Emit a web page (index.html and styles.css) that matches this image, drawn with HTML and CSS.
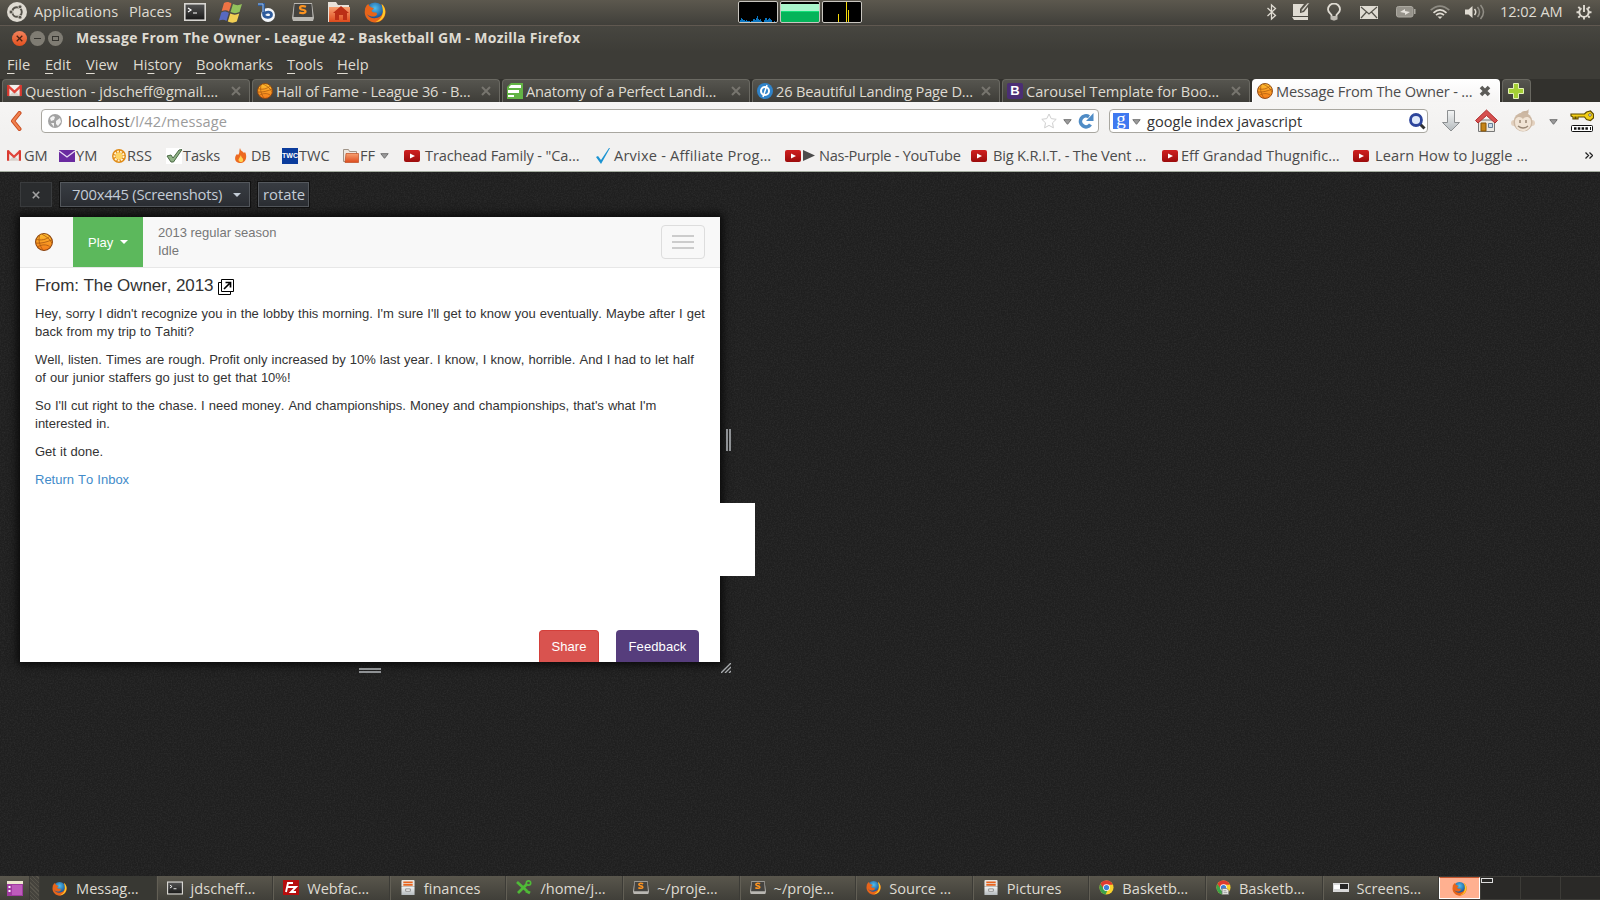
FILE: index.html
```html
<!DOCTYPE html>
<html lang="en">
<head>
<meta charset="utf-8">
<title>Message From The Owner - League 42 - Basketball GM</title>
<link rel="stylesheet" href="styles.css">
</head>
<body>
<svg class="defs" width="0" height="0">
  <defs>
    <linearGradient id="gold" x1="0" y1="0" x2="0" y2="1"><stop offset="0" stop-color="#ffbf2e"/><stop offset="1" stop-color="#f47a1a"/></linearGradient>
    <linearGradient id="red" x1="0" y1="0" x2="0" y2="1"><stop offset="0" stop-color="#d02020"/><stop offset="1" stop-color="#9c0c0c"/></linearGradient>
    <linearGradient id="sil" x1="0" y1="0" x2="0" y2="1"><stop offset="0" stop-color="#f4f5f5"/><stop offset="1" stop-color="#b4babd"/></linearGradient>
    <linearGradient id="blk" x1="0" y1="0" x2="0" y2="1"><stop offset="0" stop-color="#555"/><stop offset="1" stop-color="#171717"/></linearGradient>
    <linearGradient id="org" x1="0" y1="0" x2="0" y2="1"><stop offset="0" stop-color="#f7a070"/><stop offset="1" stop-color="#dd4a1c"/></linearGradient>
    <radialGradient id="sea" cx=".5" cy=".3" r=".6"><stop offset="0" stop-color="#4fc0ee"/><stop offset="1" stop-color="#123f86"/></radialGradient>
  </defs>
  <symbol id="ball" viewBox="0 0 16 16"><circle cx="8" cy="8" r="7.500" fill="url(#gold)" stroke="#8a4310" stroke-width=".9"/><path d="M1 5.500c4 1.500 9 .5 12-2.500M.6 9c5 .5 10-1 14.600-3M6 1c4 2 7 4 9 8M2 12.500c4-2.500 8-2.500 11-.5M4 2c-1 5 0 9 3 13" fill="none" stroke="#a8560f" stroke-width=".7"/></symbol>
  <symbol id="gmail" viewBox="0 0 16 14"><path d="M1 1h14v12H1z" fill="#f1efec"/><path d="M2 13l6-6 6 6z" fill="#d8d2cb"/><path d="M1 2l7 6.500L15 2" fill="none" stroke="#e0453a" stroke-width="2.500"/><path d="M0 1h2.500v12H0zM13.500 1H16v12h-2.500z" fill="#d93a30"/></symbol>
  <symbol id="yt" viewBox="0 0 16 12"><rect width="16" height="12" rx="2" fill="url(#red)"/><path d="M6 3.500v5L11 6z" fill="#fff"/></symbol>
  <symbol id="fox" viewBox="0 0 22 22"><circle cx="11" cy="11" r="9.500" fill="url(#sea)"/><path d="M1 6c0 8 5 10 9 9.500 3-.5 4-3 2-4-2 0-4 0-4.500-2l2.500-2C7 6 5 6 4.500 3 2 4 1 7 .7 11c0 6 5 10.500 10.500 10.500S22 17 21.500 10c-.2-3-2-6-4-7 3 5 2 10-1.500 12.500C12 18 6 18 3 13z" fill="#e8641a"/><path d="M17.500 3c4 3 5 9 2 13.500-2 3-5 4.500-8 4.500 7-3 9-9 6-18z" fill="#ffc928"/></symbol>
  <symbol id="term" viewBox="0 0 22 18"><rect x=".8" y=".8" width="20.400" height="16.400" fill="url(#blk)" stroke="#d8d6d2" stroke-width="1.600"/><path d="M4 5l3 2-3 2M9 10h4" stroke="#fff" stroke-width="1.200" fill="none"/></symbol>
  <symbol id="subl" viewBox="0 0 22 20"><path d="M2 1h18l2 15-1 3H1l-1-3z" fill="#b9b7b2"/><path d="M2.500 2h17l1 13h-19z" fill="#444340"/><path d="M14 4.700c-2.500-1-6-.8-6 1.200 0 2.500 5.500 1.300 5.500 3.600 0 1.800-3.500 2-6.200.9" fill="none" stroke="#fa9220" stroke-width="2.200"/></symbol>
  <symbol id="cab" viewBox="0 0 16 16"><rect x="1" y="0" width="14" height="7" rx="1" fill="#e9e6e2"/><path d="M3 1.500h10v1.800H3zM3 4h10v2H3z" fill="#e8641e"/><path d="M1 7h14v9H1z" fill="url(#sil)"/><path d="M5.500 9.500h5v2.500h-5z" fill="#f8f8f8" stroke="#8b8b8b"/></symbol>
  <symbol id="chrome" viewBox="0 0 16 16"><circle cx="8" cy="8" r="7.500" fill="#f9d32d"/><path d="M1.500 4.200A7.500 7.500 0 0 1 14.800 5H8L4.500 9.500z" fill="#df3b2f"/><path d="M1.500 4.200L6 11l3 .2-2 4.200A7.500 7.500 0 0 1 1.500 4.200z" fill="#3da34a"/><circle cx="8" cy="8" r="3.600" fill="#fff"/><circle cx="8" cy="8" r="2.800" fill="#3f7fd4"/></symbol>
  <symbol id="cross" viewBox="0 0 10 10"><path d="M1 1l8 8M9 1L1 9" stroke="currentColor" stroke-width="2"/></symbol>
  <symbol id="caret" viewBox="0 0 9 6"><path d="M.8.700h7.400L4.500 5.300z" fill="#9b9b9b" stroke="#707070"/></symbol>
</svg>

<header class="panel">
  <div class="launchers">
    <span class="slot s-ubuntu"><svg width="20" height="20" viewBox="0 0 20 20"><circle cx="10" cy="10" r="10" fill="#dfdbd2"/><circle cx="10" cy="10" r="4.800" fill="none" stroke="#55524a" stroke-width="1.900" stroke-dasharray="8.800 1.250" stroke-dashoffset="-5.600"/><g fill="#55524a" stroke="#dfdbd2" stroke-width=".7"><circle cx="4" cy="10" r="1.900"/><circle cx="13" cy="4.800" r="1.900"/><circle cx="13" cy="15.200" r="1.900"/></g></svg></span>
    <span class="slot s-apps">Applications</span>
    <span class="slot s-places">Places</span>
    <span class="slot s-term"><svg width="22" height="18"><use href="#term"/></svg></span>
    <span class="slot s-win"><svg width="24" height="22" viewBox="0 0 24 22"><path d="M5 2c3-1.500 5-1 7.500.5L10 10.500C8 9 5.500 9 2.700 10z" fill="#ee7344"/><path d="M14 3c3 1.500 6 1.500 9 0l-2.500 8c-3 1.500-6 1.500-9 0z" fill="#93c25c"/><path d="M2.300 11.500c3-1.500 5-1 7.500.5L7.500 20C5.500 18.500 3 18.500 0 19.500z" fill="#5769c0"/><path d="M11.300 12.500c3 1.500 6 1.500 9 0l-2.500 8c-3 1.500-6 1.500-9 0z" fill="#f2cf54"/></svg></span>
    <span class="slot s-b"><svg width="20" height="20" viewBox="0 0 20 20"><circle cx="11" cy="13" r="7" fill="#f5f7fa"/><path d="M1 2.500h5.500v9c0 5 8 5 8 1.300 0-3.300-5-3.500-7-1" fill="none" stroke="#2f5c9c" stroke-width="2.800"/><path d="M1 2h5v8" fill="none" stroke="#9abce6"/></svg></span>
    <span class="slot s-subl"><svg width="22" height="20"><use href="#subl"/></svg></span>
    <span class="slot s-home"><svg width="24" height="22" viewBox="0 0 24 22"><path d="M1 1h8l2 3h11v17H1z" fill="#e8e2da"/><path d="M2 6h21v15H2z" fill="url(#org)"/><path d="M14 5l8 7h-2v7h-4v-5h-4v5H8v-7H6z" fill="#bb2f16"/></svg></span>
    <span class="slot"><svg width="22" height="22"><use href="#fox"/></svg></span>
  </div>
  <div class="graphs">
    <span class="graph"><svg width="38" height="20" shape-rendering="crispEdges"><path d="M1 20v-2h1v-2h1v1h1v1h2v1h1v-1h1v1h3v1h1v-1h2v-2h2v1h1v-2h1v-2h1v3h1v1h1v-1h1v2h1v1h2v-2h1v-2h2v2h1v-1h1v-1h1v1h1v1h1v2h2v-1h1v1h1v1z" fill="#0a76c2"/></svg></span>
    <span class="graph mem"></span>
    <span class="graph"><svg width="38" height="20" shape-rendering="crispEdges"><path d="M15 12h1v8h-1zM23 0h1v20h-1zM25 8h1v12h-1z" fill="#f5d90a"/></svg></span>
  </div>
  <div class="tray">
    <span class="slot t-bt"><svg width="11" height="18" viewBox="0 0 11 18"><path d="M1.500 5l8 7.500L5.500 16V2l4 3.500-8 7.500" fill="none" stroke="#dfdbd2" stroke-width="1.300"/></svg></span>
    <span class="slot t-note"><svg width="18" height="18" viewBox="0 0 18 18"><path d="M1 1h11L8 6v4l4-1 4-5v9H1zM0 14h16v3H2z" fill="#dfdbd2"/><path d="M17.500 0l-6 7.500L9 9l1-2.700L15.500 0z" fill="#dfdbd2" stroke="#55524a" stroke-width=".5"/></svg></span>
    <span class="slot t-bulb"><svg width="14" height="18" viewBox="0 0 14 18"><path d="M4.500 12C3 10 1 9 1 6.500a6 6 0 0 1 12 0C13 9 11 10 9.500 12v3.500h-5z" fill="none" stroke="#dfdbd2" stroke-width="1.800"/><path d="M4 13h6v3l-2 1.500H6L4 16z" fill="#bdb9b1"/></svg></span>
    <span class="slot t-mail"><svg width="18" height="13" viewBox="0 0 18 13"><path d="M0 0h18v13H0z" fill="#dfdbd2"/><path d="M1 1l8 7 8-7M1 12l5.500-6M17 12l-5.500-6" fill="none" stroke="#55534b" stroke-width="1.200"/></svg></span>
    <span class="slot t-bat"><svg width="20" height="12" viewBox="0 0 20 12"><rect x=".5" y=".5" width="16.500" height="10.500" rx="2" fill="#96938b" stroke="#aaa79f"/><path d="M18 3h1.500v5H18z" fill="#aaa79f"/><path d="M4 6l5-3v2l5 1-5 3V7z" fill="#e5e2dc"/></svg></span>
    <span class="slot t-wifi"><svg width="20" height="14" viewBox="0 0 20 14" fill="none" stroke-width="1.700"><path d="M.7 5.200Q10-3 19.300 5.200" stroke="#8e8b83"/><path d="M3.500 7.800Q10 1.800 16.500 7.800M6 10.200Q10 6.500 14 10.200" stroke="#dfdbd2"/><path d="M7.500 11.500h5L10 14z" fill="#dfdbd2"/></svg></span>
    <span class="slot t-vol"><svg width="20" height="16" viewBox="0 0 20 16" fill="none"><path d="M0 5.500h3.500L7.500 2v12l-4-3.500H0z" fill="#dfdbd2"/><path d="M9.500 5q2.500 3 0 6" stroke="#dfdbd2" stroke-width="1.500"/><path d="M12.500 3q4 5 0 10M15.500 1q6 7 0 14" stroke="#918e86" stroke-width="1.500"/></svg></span>
    <span class="slot t-time">12:02 AM</span>
    <span class="slot"><svg width="16" height="16" viewBox="0 0 16 16" fill="none" stroke="#dfdbd2"><path d="M5.500 4.200a4.700 4.700 0 1 0 5 0M8 1v7" stroke-width="1.900"/><path d="M8 13v2.500M4 12l-1.700 1.700M12 12l1.700 1.700M3 8.300H.5M13 8.300h2.500M4 4.500L2.300 2.800M12 4.500l1.700-1.700" stroke-width="1.900"/></svg></span>
  </div>
</header>

<div class="titlebar">
  <span class="wbtn wclose"><svg width="7" height="7" viewBox="0 0 10 10"><path d="M1 1l8 8M9 1L1 9" stroke="#4b2415" stroke-width="1.800"/></svg></span>
  <span class="wbtn"><i class="dash"></i></span>
  <span class="wbtn"><i class="sq"></i></span>
  <b class="title">Message From The Owner - League 42 - Basketball GM - Mozilla Firefox</b>
</div>
<nav class="menubar">
  <span class="m1"><u>F</u>ile</span><span class="m2"><u>E</u>dit</span><span class="m3"><u>V</u>iew</span><span class="m4">Hi<u>s</u>tory</span><span class="m5"><u>B</u>ookmarks</span><span class="m6"><u>T</u>ools</span><span><u>H</u>elp</span>
</nav>

<div class="tabs">
  <div class="tab"><svg width="15" height="13"><use href="#gmail"/></svg><span class="tt wide">Question - jdscheff@gmail.…</span><svg class="x" width="10" height="10"><use href="#cross"/></svg></div>
  <div class="tab"><svg width="16" height="16"><use href="#ball"/></svg><span class="tt">Hall of Fame - League 36 - B…</span><svg class="x" width="10" height="10"><use href="#cross"/></svg></div>
  <div class="tab"><svg width="16" height="16" viewBox="0 0 16 16"><path d="M0 4l4-4h12v16H0z" fill="#62b345"/><path d="M4 2h10v3H2v-1zM1 7h11v3H1zM1 12h6v2H1z" fill="#fff"/></svg><span class="tt">Anatomy of a Perfect Landi…</span><svg class="x" width="10" height="10"><use href="#cross"/></svg></div>
  <div class="tab"><svg width="16" height="16" viewBox="0 0 16 16"><circle cx="8" cy="8" r="8" fill="#2f83c9"/><circle cx="8" cy="8" r="4" fill="none" stroke="#fff" stroke-width="2"/><path d="M10 2L6 14" stroke="#fff" stroke-width="1.500"/></svg><span class="tt">26 Beautiful Landing Page D…</span><svg class="x" width="10" height="10"><use href="#cross"/></svg></div>
  <div class="tab"><span class="bs">B</span><span class="tt wide">Carousel Template for Boo…</span><svg class="x" width="10" height="10"><use href="#cross"/></svg></div>
  <div class="tab active"><svg width="16" height="16"><use href="#ball"/></svg><span class="tt">Message From The Owner - …</span><svg class="x" width="12" height="12" viewBox="0 0 12 12"><path d="M2 2l8 8M10 2l-8 8" stroke="#5c5b58" stroke-width="3.600"/></svg></div>
  <div class="tab plus"><svg width="16" height="16" viewBox="0 0 16 16"><path d="M5.500.500h5v5h5v5h-5v5h-5v-5h-5v-5h5z" fill="#a5cf35" stroke="#e4f3b5"/></svg></div>
</div>

<div class="navbar">
  <svg class="back" width="12" height="20" viewBox="0 0 12 20"><path d="M9.500 2L3 10l6.500 8" fill="none" stroke="#c7491d" stroke-width="4" stroke-linecap="round" stroke-linejoin="round"/><path d="M9.500 2L3 10l6.500 8" fill="none" stroke="#f0824f" stroke-width="2.200" stroke-linecap="round"/></svg>
  <div class="field url">
    <svg width="14" height="14" viewBox="0 0 14 14"><circle cx="7" cy="7" r="7" fill="#a2a2a2"/><path d="M2 4l3-2 2 1-1 3-3 1zM8 7l4-3 1 4-3 4-2-2zM3 9l3 0 0 4z" fill="#f3f3f3"/></svg>
    <span class="addr">localhost<em>/l/42/message</em></span>
    <svg class="star" width="16" height="16" viewBox="0 0 16 16"><path d="M8 1l2.200 4.600 5 .7-3.700 3.500.9 5L8 12.400l-4.400 2.400.9-5L.8 6.300l5-.7z" fill="#fff" stroke="#cfcfcf"/></svg>
    <svg class="ucar" width="9" height="6"><use href="#caret"/></svg>
    <svg class="reload" width="16" height="16" viewBox="0 0 16 16"><path d="M12.500 11.500A5.500 5.500 0 1 1 11 3.700" fill="none" stroke="#4f8cc6" stroke-width="3.600"/><path d="M15.500 0v8H8z" fill="#4f8cc6"/></svg>
  </div>
  <div class="field search">
    <span class="goog">g</span><svg class="scar" width="9" height="6"><use href="#caret"/></svg>
    <span class="query">google index javascript</span>
    <svg width="17" height="17" viewBox="0 0 17 17"><path d="M11 11l4.500 4.500" stroke="#333" stroke-width="3"/><circle cx="7" cy="7" r="5.500" fill="#dfe9fa" stroke="#2d459c" stroke-width="2.800"/></svg>
  </div>
  <svg class="dl" width="18" height="22" viewBox="0 0 18 22"><path d="M5.500.500h7v12h5L9 21 .5 12.500h5z" fill="url(#sil)" stroke="#8c8f91"/></svg>
  <svg class="hm" width="23" height="24" viewBox="0 0 23 24"><path d="M3.500 11h16v11.500h-16z" fill="#ece9e2" stroke="#777"/><path d="M6 14h5v8H6z" fill="#c58417" stroke="#875508"/><path d="M13.500 14.500h4v4h-4z" fill="#cbd9e6" stroke="#667e96"/><path d="M11.500 1L22.500 11.500 20 14l-8.500-7.500L3 14 .5 11.500z" fill="#d65050" stroke="#b03030"/></svg>
  <svg class="mk" width="24" height="24" viewBox="0 0 24 24"><path d="M10 4c2-3 6-1 8-4-1 2 0 3-1 5z" fill="#c9b49f"/><circle cx="3" cy="14" r="3" fill="#e3d1bf"/><circle cx="21" cy="14" r="3" fill="#e3d1bf"/><circle cx="12" cy="13" r="9.500" fill="#cdb8a3"/><path d="M4 13c0-6 6-6 8-3 2-3 8-3 8 3 0 12-16 12-16 0z" fill="#f1e4d5"/><path d="M9 11v3M15 11v3M7 17q5 4 10 0" stroke="#9a8876" stroke-width="1.500" fill="none"/></svg>
  <svg class="c2" width="9" height="6"><use href="#caret"/></svg>
  <svg width="24" height="22" viewBox="0 0 24 22"><path d="M16.500 2l4-1 3 3v4l-3 2.500-4-1L14.500 7H8v2H6V7H5v2H3V7L1 6V4h13.500z" fill="#f3cf16" stroke="#5e4b00" stroke-width="1.200"/><circle cx="20" cy="5" r="1.300" fill="#fff" stroke="#222" stroke-width=".6"/><rect x="1.500" y="15.500" width="21" height="6" rx="1" fill="#fff" stroke="#111"/><path d="M4 18.500h14" stroke="#111" stroke-width="2.500" stroke-dasharray="2.500 1.300"/><path d="M20.500 17v3" stroke="#111"/></svg>
</div>

<div class="bookmarks">
  <span class="bm k1"><svg width="14" height="13"><use href="#gmail"/></svg><a>GM</a></span>
  <span class="bm k2"><svg width="16" height="12" viewBox="0 0 16 12"><path d="M0 0h16v12H0z" fill="#6a2aa0"/><path d="M0 1l8 6 8-6" fill="none" stroke="#e9dcf4" stroke-width="1.300"/></svg><a>YM</a></span>
  <span class="bm k3"><svg width="14" height="14" viewBox="0 0 14 14"><circle cx="7" cy="7" r="7" fill="#e08a14"/><circle cx="7" cy="7" r="4.500" fill="none" stroke="#fff2cf" stroke-width="2" stroke-dasharray="2 1.100"/><circle cx="7" cy="7" r="3.400" fill="#ffd463"/></svg><a>RSS</a></span>
  <span class="bm k4"><svg width="16" height="16" viewBox="0 0 16 16"><path d="M0 0h16v16H0z" fill="#fff"/><path d="M1 8l4-1 2 3 6-8 3-.5L7.500 14H5z" fill="#91b387" stroke="#4a6944"/></svg><a>Tasks</a></span>
  <span class="bm k5"><svg width="12" height="15" viewBox="0 0 12 15"><path d="M5 0c1 4 3 3 4 5l1-1c2 3 2 10-4 11C-1 15-1 9 2 6l1 1c2-2 1-4 2-7z" fill="#ed6a20"/><path d="M6 7c0 3 3 3 2 6-1 2-5 1-4.500-1.500z" fill="#ffd050"/></svg><a>DB</a></span>
  <span class="bm k6"><i class="twc">TWC</i><a>TWC</a></span>
  <span class="bm k7"><svg width="16" height="14" viewBox="0 0 16 14"><path d="M.5.500h5l1 2h7v10H.5z" fill="#eee7df" stroke="#a09488"/><path d="M3 4.500h12.500v9H2z" fill="url(#org)" stroke="#bf4d22" stroke-width=".7"/></svg><a>FF</a><svg class="ffc" width="9" height="6"><use href="#caret"/></svg></span>
  <span class="bm k8"><svg width="16" height="12"><use href="#yt"/></svg><a>Trachead Family - "Ca…</a></span>
  <span class="bm k9"><svg width="14" height="16" viewBox="0 0 14 16"><path d="M0 9l2-1 3 4L13 0h1L5 16z" fill="#1c94d2"/></svg><a>Arvixe - Affiliate Prog…</a></span>
  <span class="bm k10"><svg width="16" height="12"><use href="#yt"/></svg><svg class="tri" width="12" height="11" viewBox="0 0 12 11"><path d="M0 0l12 5.500L0 11z" fill="#4c4c4c"/></svg><a>Nas-Purple - YouTube</a></span>
  <span class="bm k11"><svg width="16" height="12"><use href="#yt"/></svg><a>Big K.R.I.T. - The Vent …</a></span>
  <span class="bm k12"><svg width="16" height="12"><use href="#yt"/></svg><a>Eff Grandad Thugnific…</a></span>
  <span class="bm k13"><svg width="16" height="12"><use href="#yt"/></svg><a>Learn How to Juggle …</a></span>
  <svg width="8" height="7" viewBox="0 0 8 7"><path d="M.5.500l3 3-3 3M4.500.500l3 3-3 3" fill="none" stroke="#222" stroke-width="1.300"/></svg>
</div>

<main class="stage">
  <svg class="grain" width="1600" height="704"><filter id="n" x="0" y="0" width="100%" height="100%"><feTurbulence type="fractalNoise" baseFrequency=".7" numOctaves="2" seed="4"/><feColorMatrix values="0 0 0 0 1  0 0 0 0 1  0 0 0 0 1  .11 0 0 0 -.04"/></filter><rect width="1600" height="704" filter="url(#n)"/></svg>
  <div class="rtools">
    <span class="rb rx"><svg width="8" height="8"><use href="#cross"/></svg></span>
    <span class="rb rsel">700x445 (Screenshots)<i class="down"></i></span>
    <span class="rb rrot">rotate</span>
  </div>
  <div class="frame">
    <div class="view">
      <div class="gmnav">
        <svg class="logo" width="18" height="18"><use href="#ball"/></svg>
        <span class="play">Play<i class="down"></i></span>
        <p class="status">2013 regular season<br>Idle</p>
        <span class="burger"><i></i><i></i><i></i></span>
      </div>
      <article class="msg">
        <h1>From: The Owner, 2013 <svg width="16" height="16" viewBox="0 0 16 16"><path d="M3.500.500h12v12h-12z" fill="#fff" stroke="#000"/><path d="M3 3.500H.5v12h12V13" fill="none" stroke="#000"/><path d="M6 10l5.500-5.500M7.500 3.500h5v5" fill="none" stroke="#000" stroke-width="1.700"/></svg></h1>
        <p>Hey, sorry I didn't recognize you in the lobby this morning. I'm sure I'll get to know you eventually. Maybe after I get<br>back from my trip to Tahiti?</p>
        <p>Well, listen. Times are rough. Profit only increased by 10% last year. I know, I know, horrible. And I had to let half<br>of our junior staffers go just to get that 10%!</p>
        <p>So I'll cut right to the chase. I need money. And championships. Money and championships, that's what I'm<br>interested in.</p>
        <p>Get it done.</p>
        <p class="link">Return To Inbox</p>
      </article>
      <div class="actions"><span class="act share">Share</span><span class="act feed">Feedback</span></div>
    </div>
    <div class="spill"></div>
    <i class="hr"></i><i class="hb"></i>
    <svg class="hc" width="10" height="10" viewBox="0 0 10 10"><path d="M0 10L10 0M4 10l6-6M8 10l2-2" stroke="#a8abae" stroke-width="1.400"/></svg>
  </div>
</main>

<footer class="taskbar">
  <span class="desk"><svg width="16" height="15" viewBox="0 0 16 15"><path d="M0 0h16v15H0z" fill="#a03ba0"/><path d="M0 0h16v3H0z" fill="#ece7cf"/><path d="M1.500 5h2v2h-2zM1.500 9h2v2h-2z" fill="#fff"/><path d="M5 4h10v10H5z" fill="#bd5bbb"/></svg></span>
  <i class="grip"></i>
  <span class="task on"><svg width="15" height="15"><use href="#fox"/></svg>Messag…</span>
  <span class="task"><svg width="16" height="14"><use href="#term"/></svg>jdscheff…</span>
  <span class="task"><svg width="16" height="15" viewBox="0 0 16 15"><path d="M0 0h16v15H0z" fill="#b60d0d"/><path d="M3 12L5 3h5M4 7h4M8 7h5l-5 5h5" fill="none" stroke="#fff" stroke-width="1.900"/></svg>Webfac…</span>
  <span class="task"><svg width="16" height="15"><use href="#cab"/></svg>finances</span>
  <span class="task"><svg width="16" height="15" viewBox="0 0 16 15"><path d="M1 2l10 9M2 13L11 4" stroke="#4fba37" stroke-width="2.800"/><circle cx="12.500" cy="3" r="2.200" fill="none" stroke="#4fba37" stroke-width="1.700"/><path d="M10 11l4 2" stroke="#4fba37" stroke-width="3"/></svg>/home/j…</span>
  <span class="task"><svg width="16" height="15"><use href="#subl"/></svg>~/proje…</span>
  <span class="task"><svg width="16" height="15"><use href="#subl"/></svg>~/proje…</span>
  <span class="task"><svg width="15" height="15"><use href="#fox"/></svg>Source …</span>
  <span class="task"><svg width="16" height="15"><use href="#cab"/></svg>Pictures</span>
  <span class="task"><svg width="15" height="15"><use href="#chrome"/></svg>Basketb…</span>
  <span class="task"><svg width="15" height="15" viewBox="0 0 16 16"><use href="#chrome"/><path d="M6.500 9h5l2 2v4.500h-7z" fill="#e8e8e4" stroke="#777" stroke-width=".8"/><path d="M8 11.500h3M8 13.500h4" stroke="#888" stroke-width=".8"/></svg>Basketb…</span>
  <span class="task"><svg width="16" height="9" viewBox="0 0 16 9"><path d="M0 0h16v9H0z" fill="#d9d9d9"/><path d="M7 1h8v5H7z" fill="#252525"/><path d="M1 2h6v4H1z" fill="#fff"/></svg>Screens…</span>
  <div class="ws"><span class="cur"><svg width="15" height="15"><use href="#fox"/></svg></span><span><i class="mini"></i></span><span></span><span></span></div>
</footer>
</body>
</html>
```

FILE: styles.css
```css
* { box-sizing: border-box; }
body {
  margin: 0;
  width: 1600px;
  height: 900px;
  overflow: hidden;
  display: flex;
  flex-direction: column;
  background: #222;
  color: #dfdbd2;
  font: 14.6px/18px "Open Sans", "Noto Sans", sans-serif;
  white-space: nowrap;
}
svg { display: block; flex: none; }
.defs { position: absolute; }
i, em { font-style: normal; }

.panel {
  height: 26px;
  flex: none;
  display: flex;
  background: linear-gradient(#5c584e, #403f3a);
  border-bottom: 1px solid #605850;
}
.launchers, .graphs, .tray { display: flex; align-items: center; height: 24px; }
.launchers { width: 738px; padding-left: 7px; }
.slot { flex: none; display: block; }
.s-ubuntu { width: 27px; }
.s-apps { width: 95px; padding-bottom: 2px; letter-spacing: .1px; }
.s-places { width: 55px; padding-bottom: 2px; }
.s-term { width: 35px; }
.s-win { width: 38px; }
.s-b { width: 35px; }
.s-subl { width: 35px; }
.s-home { width: 37px; }
.graphs { width: 528px; gap: 2px; }
.graph { width: 40px; height: 22px; background: #000; border: 1px solid #c9c6c0; border-radius: 2px; }
.mem { background: linear-gradient(#000 2px, #a9f5cb 2px, #a9f5cb 9px, #12e07a 9px, #12e07a 10px, #04b45a 10px); }
.t-bt { width: 26px; }
.t-note { width: 35px; }
.t-bulb { width: 33px; }
.t-mail { width: 36px; }
.t-bat { width: 34px; }
.t-wifi { width: 35px; }
.t-vol { width: 35px; }
.t-time { width: 76px; padding-bottom: 2px; letter-spacing: -.1px; }

.titlebar {
  height: 26px;
  flex: none;
  display: flex;
  align-items: center;
  gap: 3px;
  padding: 0 0 1px 12px;
  background: linear-gradient(#474640, #3d3c37);
}
.wbtn {
  width: 15px;
  height: 15px;
  border-radius: 50%;
  display: grid;
  place-items: center;
  background: #7f7c73;
}
.wclose { background: linear-gradient(#f3825c, #e4511f); }
.dash { width: 7px; height: 1px; background: #35342f; }
.sq { width: 7px; height: 5px; border: 1px solid #35342f; }
.title { margin: -1px 0 0 10px; font-size: 14px; letter-spacing: .24px; }

.menubar { height: 27px; flex: none; display: flex; padding: 3px 0 0 7px; background: #3d3c37; }
.menubar u { text-underline-offset: 3px; text-decoration-thickness: 1px; }
.m1 { width: 38px; }
.m2 { width: 41px; }
.m3 { width: 47px; }
.m4 { width: 63px; }
.m5 { width: 91px; }
.m6 { width: 50px; }

.tabs { height: 23px; flex: none; display: flex; gap: 2px; padding-left: 2px; background: #32312d; }
.tab {
  width: 248px;
  flex: none;
  display: flex;
  align-items: center;
  padding: 0 8px 1px 4px;
  border: 1px solid #6a6962;
  border-bottom: 0;
  border-radius: 4px 4px 0 0;
  background: linear-gradient(#56554f, #3e3d38);
  color: #dfdbd2;
}
.tt { margin-left: 3px; flex: 1; letter-spacing: -.18px; }
.wide { letter-spacing: 0; }
.x { color: #77756e; }
.active { background: linear-gradient(#fff, #f5f4f3); border-color: #fff; color: #4c4c4c; }
.plus { width: 29px; padding-left: 5px; }
.bs {
  width: 16px;
  height: 16px;
  border-radius: 2px;
  background: #4b2e74;
  color: #fff;
  font: bold 13px/16px "Liberation Sans", sans-serif;
  text-align: center;
}

.navbar {
  height: 34px;
  flex: none;
  display: flex;
  align-items: center;
  padding: 4px 0 0 10px;
  background: linear-gradient(#f6f5f4, #f2f1f0);
}
.field {
  height: 24px;
  display: flex;
  align-items: center;
  flex: none;
  border: 1px solid #a9a7a0;
  border-radius: 4px;
  background: #fff;
  color: #333;
}
.url { width: 1058px; margin-left: 19px; padding: 0 4px 0 6px; }
.addr { margin-left: 6px; flex: 1; letter-spacing: .07px; }
.addr em { color: #9b9b9b; }
.star { margin-right: 6px; }
.ucar { margin: 2px 6px 0 0; }
.search { width: 319px; margin-left: 10px; padding: 0 1px 0 3px; }
.goog {
  width: 16px;
  height: 16px;
  margin-right: 3px;
  background: #3f79f0;
  color: #fff;
  font: 19px/12px "Liberation Serif", serif;
  text-align: center;
}
.scar { margin-top: 2px; }
.query { margin-left: 6px; flex: 1; }
.dl { margin-left: 14px; }
.hm { margin-left: 15px; }
.mk { margin-left: 13px; }
.c2 { margin: 2px 12px 0 14px; }

.bookmarks {
  height: 36px;
  flex: none;
  display: flex;
  align-items: center;
  padding: 4px 0 0 7px;
  background: #f2f1f0;
  border-bottom: 1px solid #a5ada0;
  color: #4c4c4c;
}
.bm { flex: none; display: flex; align-items: center; }
.bm a { margin: -2px 0 0 1px; }
.k1 { width: 52px; }
.bm.k1 a { margin-left: 3px; }
.k2 { width: 53px; }
.k3 { width: 54px; }
.k4 { width: 69px; }
.k4 a { letter-spacing: -.15px; }
.k5 { width: 47px; }
.bm.k5 a { margin-left: 4px; letter-spacing: -.3px; }
.k6 { width: 61px; }
.k7 { width: 61px; }
.ffc { margin-left: 5px; }
.k8 { width: 192px; }
.bm.k8 a { margin-left: 5px; letter-spacing: -.15px; }
.k9 { width: 189px; }
.bm.k9 a { margin-left: 4px; letter-spacing: .2px; }
.k10 { width: 186px; }
.k10 a { letter-spacing: -.3px; }
.tri { margin: 0 3px 0 2px; }
.k11 { width: 191px; }
.bm.k11 a { margin-left: 6px; letter-spacing: -.18px; }
.k12 { width: 191px; }
.bm.k12 a { margin-left: 3px; }
.k13 { width: 232px; }
.bm.k13 a { margin-left: 6px; letter-spacing: .1px; }
.twc {
  width: 16px;
  height: 16px;
  background: #0b3c9c;
  color: #fff;
  font: bold 7px/16px "Liberation Sans", sans-serif;
  text-align: center;
}

.stage { position: relative; height: 704px; flex: none; padding: 10px 0 0 20px; background: #1f1f1f; }
.grain { position: absolute; left: 0; top: 0; }
.rtools { position: relative; display: flex; height: 35px; align-items: flex-start; }
.rb {
  height: 25px;
  border: 1px solid #54585d;
  outline: 1px solid #111;
  background: linear-gradient(#383c42, #2b2e33);
  color: #c3ccd6;
  font-size: 14.8px;
  line-height: 23px;
}
.rx { width: 32px; display: grid; place-items: center; background: #2a2c2e; border-color: #3a3c3e; outline: 0; color: #a3a3a3; }
.rsel { width: 190px; margin-left: 8px; padding: 0 8px 0 11px; display: flex; align-items: center; justify-content: space-between; letter-spacing: -.25px; }
.rrot { width: 51px; margin-left: 8px; padding-left: 4px; }
.down { display: inline-block; border: 4px solid transparent; border-top-color: currentColor; border-bottom: 0; }

.frame { position: relative; width: 700px; height: 445px; box-shadow: 0 0 8px 3px #0a0a0a; }
.view {
  height: 445px;
  display: flex;
  flex-direction: column;
  background: #fff;
  color: #333;
  font: 13px/18px "Liberation Sans", Arial, sans-serif;
  font-kerning: none;
}
.gmnav { height: 51px; flex: none; display: flex; align-items: center; background: #f8f8f8; border-bottom: 1px solid #e7e7e7; }
.logo { margin: 0 20px 0 15px; }
.play { width: 70px; height: 50px; padding-left: 15px; line-height: 51px; background: #5cb85c; color: #fff; }
.play .down { margin-left: 7px; vertical-align: 3px; }
.status { margin: 0 0 0 15px; flex: 1; color: #777; }
.burger {
  width: 44px;
  height: 34px;
  margin-right: 15px;
  display: flex;
  flex-direction: column;
  align-items: center;
  justify-content: center;
  gap: 4px;
  border: 1px solid #ddd;
  border-radius: 4px;
}
.burger i { width: 22px; height: 2px; background: #ccc; }
.msg { padding: 9px 15px 0; flex: 1; }
.msg h1 { margin: 0 0 10px; font-size: 17px; line-height: 18px; font-weight: 400; letter-spacing: -.1px; display: flex; gap: 5px; }
.msg h1 svg { margin-top: 2px; }
.msg p { margin: 0 0 10px; word-spacing: .45px; }
.msg .link { color: #428bca; }
.actions { display: flex; justify-content: flex-end; gap: 17px; padding-right: 21px; }
.act { height: 32px; line-height: 33px; border-radius: 4px 4px 0 0; color: #fff; text-align: center; letter-spacing: .1px; }
.share { width: 60px; line-height: 32px; background: #d9534f; border: 1px solid #d43f3a; border-bottom: 0; }
.feed { width: 83px; line-height: 34px; background: #563d7c; }
.spill { position: absolute; left: 700px; top: 286px; width: 35px; height: 73px; background: #fff; }
.hr { position: absolute; left: 706px; top: 212px; width: 5px; height: 22px; border: solid #8e9194; border-width: 0 2px; }
.hb { position: absolute; left: 339px; top: 451px; width: 22px; height: 5px; border: solid #8e9194; border-width: 2px 0; }
.hc { position: absolute; left: 701px; top: 446px; }

.taskbar { height: 24px; flex: none; display: flex; background: linear-gradient(#59564c, #403f39); }
.desk { width: 30px; padding: 5px 0 0 7px; border-right: 1px solid #3a3934; }
.grip { width: 9px; background: repeating-linear-gradient(45deg, #57544b 0 1px, #45433d 1px 3px); }
.task { width: 116.6px; flex: none; display: flex; align-items: center; gap: 8px; padding: 0 0 1px 10px; border-left: 1px solid #3c3b36; box-shadow: inset 1px 0 #625f55; }
.on { padding: 0 0 0 12px; gap: 9px; background: #383833; box-shadow: none; }
.ws { flex: 1; display: flex; background: #3c3b37; padding: 1px 0 1px 1px; gap: 1px; }
.ws span { flex: 1; background: #2a2927; }
.ws .cur { display: grid; place-items: center; background: #ffb090; border: 1px solid #fff; border-top-color: #c2552d; }
.mini { display: block; width: 12px; height: 5px; margin-top: 1px; border: 1px solid #ddd; }
```
